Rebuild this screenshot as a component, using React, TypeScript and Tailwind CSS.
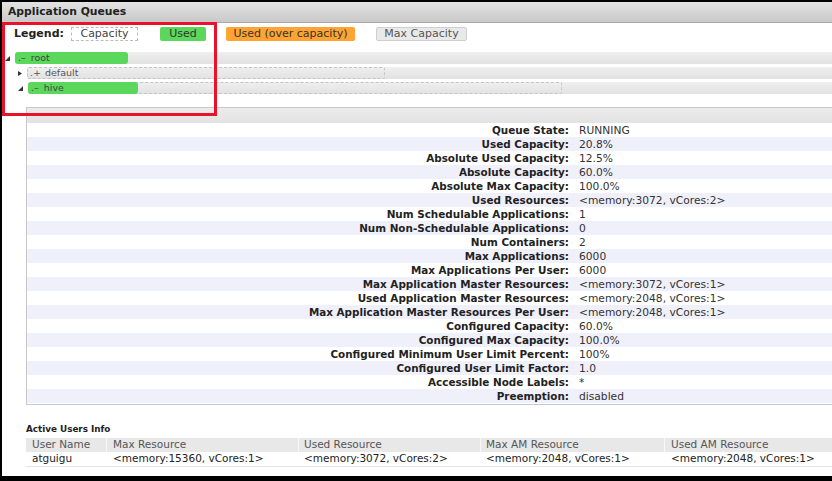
import React from 'react'

const info: [string, string][] = [
  ['Queue State:', 'RUNNING'],
  ['Used Capacity:', '20.8%'],
  ['Absolute Used Capacity:', '12.5%'],
  ['Absolute Capacity:', '60.0%'],
  ['Absolute Max Capacity:', '100.0%'],
  ['Used Resources:', '<memory:3072, vCores:2>'],
  ['Num Schedulable Applications:', '1'],
  ['Num Non-Schedulable Applications:', '0'],
  ['Num Containers:', '2'],
  ['Max Applications:', '6000'],
  ['Max Applications Per User:', '6000'],
  ['Max Application Master Resources:', '<memory:3072, vCores:1>'],
  ['Used Application Master Resources:', '<memory:2048, vCores:1>'],
  ['Max Application Master Resources Per User:', '<memory:2048, vCores:1>'],
  ['Configured Capacity:', '60.0%'],
  ['Configured Max Capacity:', '100.0%'],
  ['Configured Minimum User Limit Percent:', '100%'],
  ['Configured User Limit Factor:', '1.0'],
  ['Accessible Node Labels:', '*'],
  ['Preemption:', 'disabled'],
]

const Arrow = ({ open }: { open: boolean }) => (
  <svg width="5" height="5" viewBox="0 0 5 5" className="shrink-0">
    {open ? <polygon points="5,0 5,5 0,5" fill="#333" /> : <polygon points="0,0 4,2.5 0,5" fill="#333" />}
  </svg>
)

const App = () => {
  return (
    <div className="w-[832px] h-[481px] bg-black pt-[2px] pl-[2px] pb-[5px] overflow-hidden font-['DejaVu_Sans',Verdana,sans-serif]">
      <div className="relative bg-white h-full flex flex-col">
        <div className="h-[21px] shrink-0 bg-gradient-to-b from-[#e2e2e2] to-[#c9c9c9] border-b border-[#a9a9a9] flex items-center pl-[6px]">
          <span className="text-[10.8px] font-bold text-[#222]">Application Queues</span>
        </div>

        <div className="flex items-center h-[14px] mt-[4px] text-[11px]">
          <span className="ml-[12px] font-bold text-[#222] w-[57px]">Legend:</span>
          <span className="w-[67px] h-[14px] border border-dashed border-[#bbb] flex items-center justify-center text-[#444]">Capacity</span>
          <span className="ml-[22px] w-[46px] h-[14px] rounded-[2px] bg-[#5bd75b] flex items-center justify-center text-[#333]">Used</span>
          <span className="ml-[20px] w-[129px] h-[14px] rounded-[2px] bg-[#ffa333] flex items-center justify-center text-[#333]">Used (over capacity)</span>
          <span className="ml-[21px] w-[91px] h-[14px] rounded-[2px] bg-[#e9e9e9] border border-[#cfcfcf] flex items-center justify-center text-[#555]">Max Capacity</span>
        </div>

        <div className="flex flex-col gap-[3px] mt-[11px] text-[9.5px] text-[#555]">
          <div className="flex items-center h-[12px]">
            <span className="ml-[3px] w-[10px]"><Arrow open /></span>
            <div className="flex-1 h-[12px] bg-gradient-to-b from-[#efefef] to-[#e2e2e2] rounded-l-[3px] relative">
              <div className="absolute left-0 top-0 h-[12px] w-[113px] bg-[#5bd75b] rounded-[3px] flex items-center pl-[3px] gap-[5px] text-[#444]">
                <span>.–</span><span>root</span>
              </div>
            </div>
          </div>
          <div className="flex items-center h-[12px]">
            <span className="ml-[16px] w-[9px]"><Arrow open={false} /></span>
            <div className="flex-1 h-[12px] bg-gradient-to-b from-[#efefef] to-[#e2e2e2] rounded-l-[3px] relative">
              <div className="absolute left-0 top-0 h-[12px] w-[358px] border border-dashed border-[#c4c4c4] rounded-[2px] flex items-center pl-[2px] gap-[4px] text-[#555]">
                <span>.+</span><span>default</span>
              </div>
            </div>
          </div>
          <div className="flex items-center h-[12px]">
            <span className="ml-[16px] w-[10px]"><Arrow open /></span>
            <div className="flex-1 h-[12px] bg-gradient-to-b from-[#efefef] to-[#e2e2e2] rounded-l-[3px] relative">
              <div className="absolute left-0 top-0 h-[12px] w-[534px] border border-dashed border-[#c4c4c4] rounded-[2px]" />
              <div className="absolute left-0 top-0 h-[12px] w-[110px] bg-[#5bd75b] rounded-[3px] flex items-center pl-[3px] gap-[5px] text-[#444]">
                <span>.–</span><span>hive</span>
              </div>
            </div>
          </div>
        </div>

        <div className="ml-[24px] mt-[13px] border-t border-l border-b border-[#c8c8c8]">
          <div className="h-[15px] bg-gradient-to-b from-[#ececec] to-[#e2e2e2]" />
          <div className="pb-[1px]">
            {info.map(([k, v], i) => (
              <div key={k} className={`flex h-[14px] items-center pt-[2px] ${i % 2 === 1 ? 'bg-[#f0f0fb]' : 'bg-white'}`}>
                <span className="w-[546px] text-right pr-[4px] text-[10.4px] font-bold text-[#222] whitespace-nowrap">{k}</span>
                <span className="pl-[6px] text-[10.7px] text-[#333] whitespace-nowrap">{v}</span>
              </div>
            ))}
          </div>
        </div>

        <div className="ml-[24px] mt-[19px] h-[12px] flex items-center text-[8.8px] font-bold text-[#222]">Active Users Info</div>
        <div className="ml-[24px] mt-[2px] text-[10.5px]">
          <div className="flex h-[14px] items-center bg-[#e8e8e8] text-[#555]">
            <span className="w-[81px] h-full flex items-center pl-[6px] border-r border-[#f8f8f8]">User Name</span>
            <span className="w-[192px] h-full flex items-center pl-[6px] border-r border-[#f8f8f8]">Max Resource</span>
            <span className="w-[182px] h-full flex items-center pl-[5px] border-r border-[#f8f8f8]">Used Resource</span>
            <span className="w-[184px] h-full flex items-center pl-[5px] border-r border-[#f8f8f8]">Max AM Resource</span>
            <span className="flex-1 pl-[6px]">Used AM Resource</span>
          </div>
          <div className="flex h-[15px] items-center text-[#222] border-b border-[#e4e4e4]">
            <span className="w-[81px] pl-[6px]">atguigu</span>
            <span className="w-[192px] pl-[6px]">&lt;memory:15360, vCores:1&gt;</span>
            <span className="w-[182px] pl-[5px]">&lt;memory:3072, vCores:2&gt;</span>
            <span className="w-[184px] pl-[5px]">&lt;memory:2048, vCores:1&gt;</span>
            <span className="flex-1 pl-[6px]">&lt;memory:2048, vCores:1&gt;</span>
          </div>
        </div>

        <div className="absolute left-0 top-[20px] w-[215px] h-[94px] border-[3px] border-[#e8132b] pointer-events-none" />
      </div>
    </div>
  )
}

export default App
